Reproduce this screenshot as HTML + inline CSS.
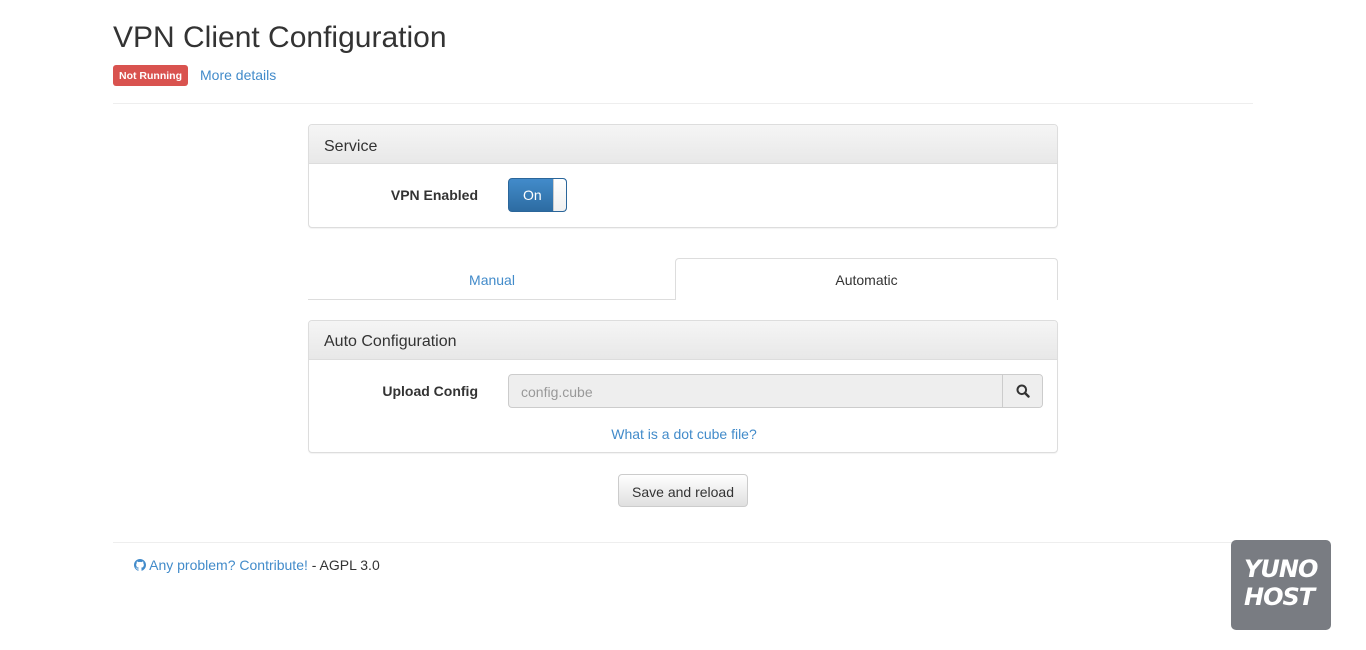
<!DOCTYPE html>
<html><head><meta charset="utf-8"><style>
*{box-sizing:border-box}
body{margin:0;background:#fff;font-family:"Liberation Sans",Arial,sans-serif;font-size:14px;color:#333;width:1366px;height:650px;overflow:hidden;position:relative}
.abs{position:absolute}
a{color:#428bca;text-decoration:none}
.panel{position:absolute;left:308px;width:750px;border:1px solid #ddd;border-radius:4px;box-shadow:0 1px 1px rgba(0,0,0,.05);background:#fff}
.ph{height:39px;background:linear-gradient(#f5f5f5,#e8e8e8);border-bottom:1px solid #ddd;border-radius:3px 3px 0 0;font-size:16px;padding:13px 15px 0;color:#333}
</style></head><body>
<div class="abs" style="left:113px;top:21px;font-size:30px;color:#333">VPN Client Configuration</div>
<div class="abs" style="left:113px;top:65px;width:75px;height:21px;background:#d9534f;border-radius:3px;color:#fff;font-weight:bold;font-size:10.5px;text-align:center;line-height:22px">Not Running</div>
<a class="abs" style="left:200px;top:67px">More details</a>
<div class="abs" style="left:113px;top:103px;width:1140px;border-top:1px solid #eee"></div>

<div class="panel" style="top:124px;height:104px">
<div class="ph">Service</div>
<div class="abs" style="left:0;width:169px;text-align:right;top:62px;font-weight:bold">VPN Enabled</div>
<div class="abs" style="left:199px;top:53px;width:59px;height:34px;border:1px solid #2b669a;border-radius:4px;background:linear-gradient(#428bca,#2d6ca2);overflow:hidden">
<span class="abs" style="left:14px;top:8px;color:#fff;font-size:14px">On</span>
<div class="abs" style="right:0;top:0;width:13px;height:32px;background:linear-gradient(#fff,#f0f0f0);border-left:1px solid #ccc;border-radius:0 3px 3px 0"></div></div>
</div>

<div class="abs" style="left:308px;top:299px;width:368px;border-top:1px solid #ddd"></div>
<div class="abs" style="left:308px;top:272px;width:368px;text-align:center"><a>Manual</a></div>
<div class="abs" style="left:675px;top:258px;width:383px;height:42px;border:1px solid #ddd;border-bottom:none;border-radius:4px 4px 0 0;text-align:center;padding-top:13px;background:#fff">Automatic</div>

<div class="panel" style="top:320px;height:133px">
<div class="ph" style="height:39px;padding-top:12px">Auto Configuration</div>
<div class="abs" style="left:0;width:169px;text-align:right;top:62px;font-weight:bold">Upload Config</div>
<div class="abs" style="left:199px;top:53px;width:535px;height:34px;border:1px solid #ccc;border-radius:4px;background:#eee;overflow:hidden">
<span class="abs" style="left:12px;top:9px;color:#999">config.cube</span>
<div class="abs" style="right:0;top:0;width:40px;height:32px;border-left:1px solid #ccc;background:#eee">
<svg class="abs" style="left:13px;top:9px" width="14" height="14" viewBox="0 0 14 14"><circle cx="5.8" cy="5.8" r="4.3" fill="none" stroke="#333" stroke-width="2"/><path d="M9 9l3.5 3.5" stroke="#333" stroke-width="2.4" stroke-linecap="round"/></svg></div></div>
<a class="abs" style="left:0;width:750px;text-align:center;top:105px">What is a dot cube file?</a>
</div>

<div class="abs" style="left:618px;top:474px;width:130px;height:33px;border:1px solid #ccc;border-radius:4px;background:linear-gradient(#fff,#e0e0e0);text-align:center;line-height:35px">Save and reload</div>

<div class="abs" style="left:113px;top:542px;width:1140px;border-top:1px solid #eee"></div>
<div class="abs" style="left:134px;top:557px"><a><svg width="12" height="12" viewBox="0 0 16 16" style="vertical-align:-1px"><path fill="#428bca" d="M8 0C3.580 0 0 3.58 0 8c0 3.54 2.29 6.53 5.47 7.59.4.07.55-.17.55-.38v-1.330c-2.23.48-2.7-1.07-2.7-1.07-.36-.93-.89-1.17-.89-1.17-.73-.5.05-.49.05-.49.8.06 1.23.83 1.23.83.72 1.23 1.88.87 2.34.67.07-.52.28-.87.51-1.070-1.78-.2-3.64-.89-3.64-3.95 0-.87.31-1.59.82-2.15-.08-.2-.36-1.02.08-2.12 0 0 .67-.21 2.2.82a7.6 7.6 0 014 0c1.53-1.04 2.2-.82 2.2-.82.44 1.1.16 1.92.08 2.12.51.56.82 1.27.82 2.15 0 3.07-1.87 3.75-3.65 3.95.29.25.54.73.54 1.48v2.2c0 .21.15.46.55.38A8 8 0 0016 8c0-4.42-3.58-8-8-8z"/></svg> Any problem? Contribute!</a> - AGPL 3.0</div>

<div class="abs" style="left:1231px;top:540px;width:100px;height:90px;background:#797c82;border-radius:5px;color:#fff;font-weight:bold;font-size:24px;line-height:28px;padding:15px 0 0 13px;letter-spacing:-1px;font-family:'DejaVu Sans',sans-serif;font-style:italic">YUNO<br>HOST</div>
</body></html>
